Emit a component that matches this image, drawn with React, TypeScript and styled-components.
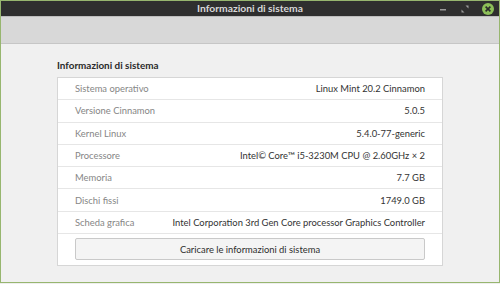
import React from "react";
import styled, { createGlobalStyle } from "styled-components";

const Global = createGlobalStyle`
  html, body { margin: 0; padding: 0; background: #eeeeee; }
  * { box-sizing: border-box; }
`;

const Window = styled.div`
  width: 500px;
  height: 283px;
  border: 1px solid #97b66f;
  display: flex;
  flex-direction: column;
  background: #f0f0f0;
  font-family: Lato, "Noto Sans", sans-serif;
  overflow: hidden;
`;

const TitleBar = styled.div`
  height: 15px;
  background: #2f2f2f;
  position: relative;
  display: flex;
  align-items: center;
  justify-content: center;
  flex-shrink: 0;
`;

const Title = styled.div`
  color: #d8d8d8;
  font-weight: bold;
  font-size: 10.3px;
  line-height: 15px;
`;

const Controls = styled.div`
  position: absolute;
  right: 4px;
  top: 0;
  height: 15px;
  display: flex;
  align-items: center;
  gap: 11px;
`;

const Toolbar = styled.div`
  height: 28px;
  flex-shrink: 0;
  background: #d8d8d8;
  border-top: 1px solid #bdbdbd;
  border-bottom: 1px solid #c6c6c6;
`;

const Content = styled.div`
  flex: 1;
  padding: 14px 56px 0 56px;
  display: flex;
  flex-direction: column;
`;

const Heading = styled.div`
  font-weight: bold;
  font-size: 9.9px;
  color: #2a2a2a;
  line-height: 15px;
  margin-bottom: 4px;
`;

const Frame = styled.div`
  background: #ffffff;
  border: 1px solid #d6d6d6;
  display: flex;
  flex-direction: column;
  padding-bottom: 5px;
`;

const Row = styled.div`
  height: 22.3px;
  border-bottom: 1px solid #e6e6e6;
  display: flex;
  align-items: center;
  justify-content: space-between;
  gap: 12px;
  padding: 0 17px;
  font-size: 9.4px;
  white-space: nowrap;
`;

const Label = styled.span`
  color: #868686;
`;

const Value = styled.span`
  color: #333333;
`;

const ButtonRow = styled.div`
  padding: 4px 17px 0 17px;
`;

const Button = styled.div`
  height: 22px;
  border: 1px solid #c9c9c9;
  border-radius: 2px;
  background: #f4f4f4;
  color: #2e2e2e;
  font-size: 9.4px;
  display: flex;
  align-items: center;
  justify-content: center;
`;

const rows: [string, string][] = [
  ["Sistema operativo", "Linux Mint 20.2 Cinnamon"],
  ["Versione Cinnamon", "5.0.5"],
  ["Kernel Linux", "5.4.0-77-generic"],
  ["Processore", "Intel\u00a9 Core\u2122 i5-3230M CPU @ 2.60GHz \u00d7 2"],
  ["Memoria", "7.7 GB"],
  ["Dischi fissi", "1749.0 GB"],
  ["Scheda grafica", "Intel Corporation 3rd Gen Core processor Graphics Controller"],
];

export default function App() {
  return (
    <>
      <Global />
      <Window>
        <TitleBar>
          <Title>Informazioni di sistema</Title>
          <Controls>
            <svg width="10" height="10" viewBox="0 0 10 10">
              <rect x="1" y="5" width="6" height="1.5" fill="#9a9a9a" />
            </svg>
            <svg width="10" height="10" viewBox="0 0 10 10">
              <path d="M5.5 1.5h3v3z M4.5 8.5h-3v-3z" fill="#9a9a9a" />
            </svg>
            <svg width="14" height="14" viewBox="0 0 14 14">
              <circle cx="7" cy="7" r="6" fill="#8cbf58" />
              <path d="M4.6 4.6l4.8 4.8M9.4 4.6l-4.8 4.8" stroke="#2a2a2a" strokeWidth="1.6" />
            </svg>
          </Controls>
        </TitleBar>
        <Toolbar />
        <Content>
          <Heading>Informazioni di sistema</Heading>
          <Frame>
            {rows.map(([l, v]) => (
              <Row key={l}>
                <Label>{l}</Label>
                <Value>{v}</Value>
              </Row>
            ))}
            <ButtonRow>
              <Button>Caricare le informazioni di sistema</Button>
            </ButtonRow>
          </Frame>
        </Content>
      </Window>
    </>
  );
}
